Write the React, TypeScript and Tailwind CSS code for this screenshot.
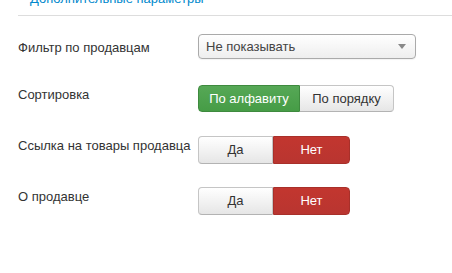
export default function App() {
  return (
    <div className="h-[273px] w-[452px] overflow-hidden bg-white font-['Liberation_Sans',Arial,sans-serif] text-[13px] text-[#333]">
      <div className="ml-[18px] mt-[-10px] h-[26px] border-b border-[#ddd] pl-[12px] leading-[18px] text-[#08c]">
        Дополнительные параметры
      </div>

      <div className="ml-[18px] mt-[18px]">
        <div className="flex h-[51px] items-start">
          <label className="w-[180px] pt-[5px] leading-[18px]">Фильтр по продавцам</label>
          <div className="relative flex h-[25px] w-[218px] items-center rounded-[4px] border border-[#aaa] bg-gradient-to-b from-white to-[#eee] pl-[7px] leading-[18px] text-[#444] shadow-[0_1px_1px_rgba(0,0,0,0.05)]">
            Не показывать
            <span className="absolute right-[9px] top-[9px] h-0 w-0 border-x-[4px] border-t-[5px] border-x-transparent border-t-[#888]" />
          </div>
        </div>

        <div className="flex h-[51px] items-start">
          <label className="w-[180px] pt-[1px] leading-[18px]">Сортировка</label>
          <div className="flex h-[27px]">
            <button className="w-[102px] rounded-l-[4px] border border-[#3e8a3e] bg-gradient-to-b from-[#56a856] to-[#469c46] text-white">
              По алфавиту
            </button>
            <button className="w-[94px] rounded-r-[4px] border border-l-0 border-[#c5c5c5] border-b-[#b3b3b3] bg-gradient-to-b from-white to-[#e6e6e6] text-[#333]">
              По порядку
            </button>
          </div>
        </div>

        <div className="flex h-[51px] items-start">
          <label className="w-[180px] pt-[1px] leading-[18px]">Ссылка на товары продавца</label>
          <YesNo />
        </div>

        <div className="flex h-[51px] items-start">
          <label className="w-[180px] pt-[1px] leading-[18px]">О продавце</label>
          <YesNo />
        </div>
      </div>
    </div>
  );
}

function YesNo() {
  return (
    <div className="flex h-[28px]">
      <button className="w-[75px] rounded-l-[4px] border border-[#c5c5c5] border-b-[#b3b3b3] bg-gradient-to-b from-white to-[#e6e6e6] text-[#333]">
        Да
      </button>
      <button className="w-[77px] rounded-r-[4px] border border-[#a8302a] bg-gradient-to-b from-[#c2362f] to-[#b93530] text-white">
        Нет
      </button>
    </div>
  );
}
